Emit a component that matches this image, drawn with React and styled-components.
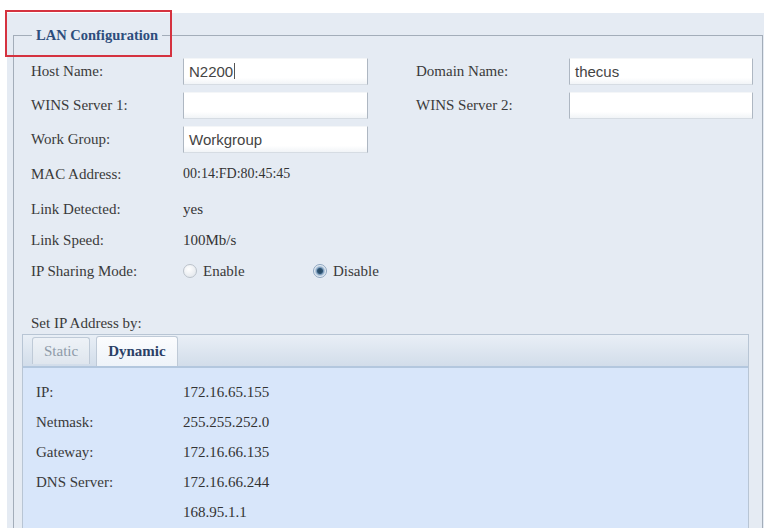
import React from "react";
import styled, { createGlobalStyle } from "styled-components";

const GlobalStyle = createGlobalStyle`
  html, body {
    margin: 0;
    padding: 0;
    background: #ffffff;
  }
  body {
    font-family: "Liberation Serif", "Times New Roman", serif;
  }
`;

const Page = styled.div`
  position: relative;
  width: 768px;
  height: 528px;
  overflow: hidden;
  padding: 13px 4px 0 7px;
  box-sizing: border-box;
`;

// red annotation box drawn over the legend
const Highlight = styled.div`
  position: absolute;
  left: 5px;
  top: 10px;
  width: 167px;
  height: 47px;
  border: 2px solid #d5323f;
  box-sizing: border-box;
  pointer-events: none;
`;

const Panel = styled.div`
  height: 100%;
  background: #e5ebf3;
  padding-top: 14px;
  box-sizing: border-box;
  overflow: hidden;
`;

const Fieldset = styled.fieldset`
  margin: 0 1px 0 6px;
  padding: 11px 0 0 8px;
  min-width: 0;
  height: 520px;
  border: 1px solid #a3adb9;
  border-bottom: none;
`;

const Legend = styled.legend`
  margin-left: 10px;
  padding: 0 4px;
  font-size: 14.5px;
  line-height: 16px;
  font-weight: bold;
  color: #2d4d7c;
`;

const Form = styled.div`
  padding-left: 9px;
`;

const Row = styled.div`
  display: flex;
  align-items: center;
  height: ${(p) => p.$h || 34}px;
  margin-top: ${(p) => p.$mt || 0}px;
`;

const Label = styled.div`
  width: ${(p) => p.$w || 152}px;
  flex-shrink: 0;
  font-size: 15px;
  color: #3a3a3a;
  white-space: nowrap;
`;

const Value = styled.div`
  font-size: ${(p) => p.$size || 15}px;
  color: #333333;
`;

const Gap = styled.div`
  width: 48px;
  flex-shrink: 0;
`;

const Field = styled.div`
  width: ${(p) => p.$w || 185}px;
  height: 27px;
  box-sizing: border-box;
  display: flex;
  align-items: center;
  padding: 0 5px;
  background: linear-gradient(#ffffff 75%, #f1f4f7);
  border: 1px solid #d6dce3;
  border-left-color: #aeb7c2;
  border-right-color: #aeb7c2;
  border-top-color: #f4f6f8;
  font-family: "Liberation Sans", Arial, sans-serif;
  font-size: 15px;
  color: #444444;
`;

const Caret = styled.span`
  display: inline-block;
  width: 1px;
  height: 16px;
  margin-left: 1px;
  background: #555555;
`;

const Option = styled.label`
  display: flex;
  align-items: center;
  width: 130px;
  font-size: 15px;
  color: #3a3a3a;
`;

const Radio = styled.span`
  width: 14px;
  height: 14px;
  margin-right: 6px;
  border-radius: 50%;
  box-sizing: border-box;
  border: 1px solid ${(p) => (p.$on ? "#8ea6c0" : "#bcc3cb")};
  background: ${(p) =>
    p.$on
      ? "radial-gradient(circle, #27465f 0, #2f5574 2.5px, #7d9dbd 3.5px, #e4ecf4 5.5px)"
      : "radial-gradient(circle at 40% 35%, #ffffff, #dde2e8)"};
`;

const TabBox = styled.div`
  margin-right: 13px;
  border: 1px solid #b8c5d4;
  border-bottom: none;
  background: #d8e6fa;
  height: 200px;
`;

const TabStrip = styled.div`
  display: flex;
  align-items: flex-end;
  gap: 6px;
  height: 31px;
  padding-left: 9px;
  background: linear-gradient(#e9eff6, #d2ddea);
  border-bottom: 2px solid #b3c7de;
`;

const Tab = styled.div`
  box-sizing: border-box;
  height: ${(p) => (p.$active ? 30 : 27)}px;
  margin-bottom: ${(p) => (p.$active ? 0 : 2)}px;
  padding: 0 11px;
  display: flex;
  align-items: center;
  border: 1px solid #bfcad7;
  border-bottom: none;
  border-radius: 3px 3px 0 0;
  background: ${(p) =>
    p.$active
      ? "linear-gradient(#fbfcfe, #eef3f9)"
      : "linear-gradient(#eef2f7, #dfe6ee)"};
  color: ${(p) => (p.$active ? "#2b3f66" : "#8e9aa8")};
  font-size: 15px;
  font-weight: ${(p) => (p.$active ? "bold" : "normal")};
`;

const TabContent = styled.div`
  padding: 9px 0 0 13px;
`;

const info = [
  { label: "MAC Address:", value: "00:14:FD:80:45:45", h: 36, size: 14 },
  { label: "Link Detected:", value: "yes", h: 34 },
  { label: "Link Speed:", value: "100Mb/s", h: 28 },
];

const dynamic = [
  { label: "IP:", value: "172.16.65.155" },
  { label: "Netmask:", value: "255.255.252.0" },
  { label: "Gateway:", value: "172.16.66.135" },
  { label: "DNS Server:", value: "172.16.66.244" },
  { label: "", value: "168.95.1.1" },
];

export default function App() {
  return (
    <Page>
      <GlobalStyle />
      <Panel>
        <Fieldset>
          <Legend>LAN Configuration</Legend>
          <Form>
            <Row>
              <Label>Host Name:</Label>
              <Field>
                N2200
                <Caret />
              </Field>
              <Gap />
              <Label $w={153}>Domain Name:</Label>
              <Field $w={184}>thecus</Field>
            </Row>
            <Row>
              <Label>WINS Server 1:</Label>
              <Field />
              <Gap />
              <Label $w={153}>WINS Server 2:</Label>
              <Field $w={184} />
            </Row>
            <Row>
              <Label>Work Group:</Label>
              <Field>Workgroup</Field>
            </Row>
            {info.map((item) => (
              <Row key={item.label} $h={item.h}>
                <Label>{item.label}</Label>
                <Value $size={item.size}>{item.value}</Value>
              </Row>
            ))}
            <Row>
              <Label>IP Sharing Mode:</Label>
              <Option>
                <Radio />
                Enable
              </Option>
              <Option>
                <Radio $on />
                Disable
              </Option>
            </Row>
            <Row $h={22} $mt={24}>
              <Label>Set IP Address by:</Label>
            </Row>
          </Form>
          <TabBox>
            <TabStrip>
              <Tab>Static</Tab>
              <Tab $active>Dynamic</Tab>
            </TabStrip>
            <TabContent>
              {dynamic.map((item) => (
                <Row key={item.value} $h={30}>
                  <Label $w={147}>{item.label}</Label>
                  <Value>{item.value}</Value>
                </Row>
              ))}
            </TabContent>
          </TabBox>
        </Fieldset>
      </Panel>
      <Highlight />
    </Page>
  );
}
